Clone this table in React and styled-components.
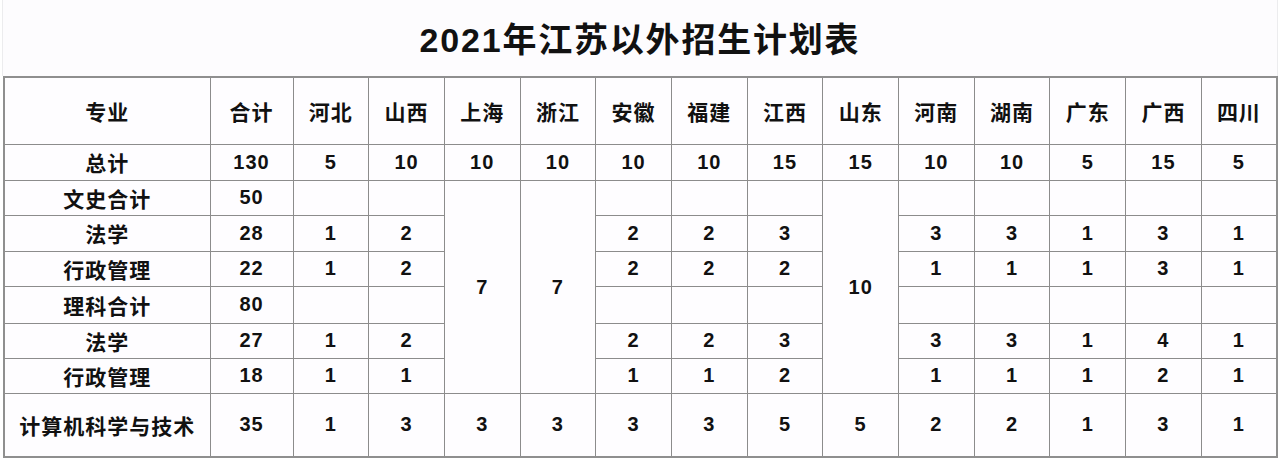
import React from 'react';
import styled, { createGlobalStyle } from 'styled-components';

const GlobalStyle = createGlobalStyle`
    html, body {
        margin: 0;
        padding: 0;
        background: #ffffff;
    }
    body {
        font-family: "Liberation Sans", "Noto Sans CJK SC", sans-serif;
        color: #111111;
    }
`;

const provinces = ['河北', '山西', '上海', '浙江', '安徽', '福建', '江西', '山东', '河南', '湖南', '广东', '广西', '四川'];

// null = empty cell, 'span' = covered by a merged cell above
const rows = [
    { name: '总计', total: 130, h: 36, cells: [5, 10, 10, 10, 10, 10, 15, 15, 10, 10, 5, 15, 5] },
    { name: '文史合计', total: 50, h: 35, cells: [null, null, 7, 7, null, null, null, 10, null, null, null, null, null], merge: true },
    { name: '法学', total: 28, h: 36, cells: [1, 2, 'span', 'span', 2, 2, 3, 'span', 3, 3, 1, 3, 1] },
    { name: '行政管理', total: 22, h: 35, cells: [1, 2, 'span', 'span', 2, 2, 2, 'span', 1, 1, 1, 3, 1] },
    { name: '理科合计', total: 80, h: 37, cells: [null, null, 'span', 'span', null, null, null, 'span', null, null, null, null, null] },
    { name: '法学', total: 27, h: 35, cells: [1, 2, 'span', 'span', 2, 2, 3, 'span', 3, 3, 1, 4, 1] },
    { name: '行政管理', total: 18, h: 35, cells: [1, 1, 'span', 'span', 1, 1, 2, 'span', 1, 1, 1, 2, 1] },
    { name: '计算机科学与技术', total: 35, h: 64, cells: [1, 3, 3, 3, 3, 3, 5, 5, 2, 2, 1, 3, 1] },
];

const App = () => (
    <Page>
        <GlobalStyle />
        <TitleBox>
            <Title>2021年江苏以外招生计划表</Title>
        </TitleBox>
        <Table>
            <colgroup>
                <col style={{ width: 206 }} />
                <col style={{ width: 83 }} />
                {provinces.map(p => <col key={p} />)}
            </colgroup>
            <tbody>
                <Row height={67}>
                    <Cell cjk>专业</Cell>
                    <Cell cjk>合计</Cell>
                    {provinces.map(p => <Cell cjk key={p}>{p}</Cell>)}
                </Row>
                {rows.map((r, i) => (
                    <Row key={i} height={r.h}>
                        <Cell cjk>{r.name}</Cell>
                        <Cell>{r.total}</Cell>
                        {r.cells.map((c, j) => {
                            if (c === 'span') return null;
                            if (r.merge && c !== null) {
                                return <Cell key={j} rowSpan={6} merged>{c}</Cell>;
                            }
                            return <Cell key={j}>{c}</Cell>;
                        })}
                    </Row>
                ))}
            </tbody>
        </Table>
    </Page>
);

export default App;

const Page = styled.div`
    width: 1280px;
    height: 462px;
    padding: 0 2px 0 3px;
    box-sizing: border-box;
    background: #ffffff;
`;

const TitleBox = styled.div`
    height: 76px;
    display: flex;
    align-items: center;
    justify-content: center;
    background: #fdfcfe;
    border-left: 1px solid #ececee;
    border-right: 1px solid #ececee;
    margin-left: -1px;
    box-sizing: border-box;
    padding-bottom: 2px;
`;

const Title = styled.h1`
    margin: 0;
    font-size: 34px;
    font-weight: 700;
    letter-spacing: 1.8px;
    color: #111111;
`;

const Table = styled.table`
    width: 1275px;
    table-layout: fixed;
    border-collapse: collapse;
    border: 2px solid #8f8f8f;
    background: #fefdff;
`;

const Row = styled.tr`
    height: ${props => props.height}px;
`;

const Cell = styled.td`
    border: 1.5px solid #8c8c8c;
    padding: 0;
    text-align: center;
    vertical-align: middle;
    font-size: ${props => (props.cjk ? 21 : 20)}px;
    font-weight: 700;
    letter-spacing: 1px;
    color: #111111;
    white-space: nowrap;
    ${props => props.merged && `
        padding-top: 2px;
    `}
`;
